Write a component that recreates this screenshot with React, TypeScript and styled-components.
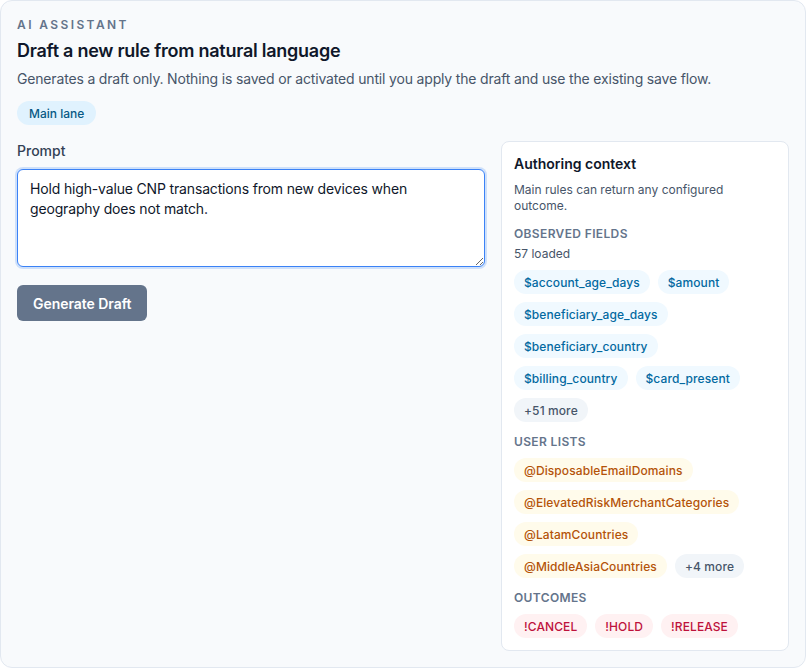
import React from 'react';
import styled, { createGlobalStyle } from 'styled-components';

type Tone = 'sky' | 'amber' | 'rose' | 'slate';

const GlobalStyle = createGlobalStyle`
  html, body {
    margin: 0;
    padding: 0;
    background: #ffffff;
  }
  body {
    font-family: Inter, "Noto Sans", "Liberation Sans", sans-serif;
    -webkit-font-smoothing: antialiased;
  }
  * {
    box-sizing: border-box;
  }
`;

const Card = styled.section`
  border: 1px solid #e2e8f0;
  border-radius: 12px;
  background: #f8fafc;
  padding: 16px;
  display: flex;
  flex-direction: column;
`;

const Eyebrow = styled.div`
  font-size: 12px;
  line-height: 16px;
  font-weight: 600;
  letter-spacing: 0.2em;
  text-transform: uppercase;
  color: #64748b;
`;

const Title = styled.h2`
  margin: 4px 0 0;
  font-size: 18px;
  line-height: 28px;
  font-weight: 600;
  letter-spacing: -0.25px;
  color: #0f172a;
`;

const Description = styled.p`
  margin: 4px 0 0;
  font-size: 14px;
  line-height: 20px;
  letter-spacing: -0.17px;
  color: #475569;
`;

const LaneBadge = styled.span`
  align-self: flex-start;
  margin-top: 12px;
  height: 24px;
  display: inline-flex;
  align-items: center;
  padding: 0 12px;
  border-radius: 999px;
  background: #e0f2fe;
  color: #075985;
  font-size: 12px;
  font-weight: 500;
`;

const Body = styled.div`
  margin-top: 16px;
  display: grid;
  grid-template-columns: 1fr 288px;
  gap: 16px;
  align-items: start;
`;

const PromptColumn = styled.div`
  display: flex;
  flex-direction: column;
`;

const Label = styled.label`
  font-size: 14px;
  line-height: 20px;
  font-weight: 500;
  color: #334155;
`;

const PromptInput = styled.textarea`
  margin-top: 8px;
  height: 98px;
  padding: 9px 12px;
  border: 1px solid #3b82f6;
  border-radius: 6px;
  background: #ffffff;
  box-shadow: 0 0 0 2px rgba(59, 130, 246, 0.22);
  font-family: inherit;
  font-size: 14px;
  line-height: 20px;
  letter-spacing: -0.16px;
  color: #0f172a;
  outline: none;
  resize: vertical;
`;

const GenerateButton = styled.button`
  align-self: flex-start;
  margin-top: 18px;
  height: 36px;
  padding: 0 16px;
  border: none;
  border-radius: 6px;
  background: #64748b;
  color: #ffffff;
  font-family: inherit;
  font-size: 14px;
  font-weight: 600;
  letter-spacing: -0.05px;
`;

const ContextPanel = styled.aside`
  border: 1px solid #e2e8f0;
  border-radius: 8px;
  background: #ffffff;
  padding: 12px;
  display: flex;
  flex-direction: column;
`;

const PanelTitle = styled.h3`
  margin: 0;
  font-size: 14px;
  line-height: 20px;
  font-weight: 600;
  color: #0f172a;
`;

const PanelNote = styled.p`
  margin: 8px 0 0;
  font-size: 12px;
  line-height: 16px;
  color: #475569;
`;

const SectionHeading = styled.div`
  margin-top: 12px;
  font-size: 12px;
  line-height: 16px;
  font-weight: 600;
  letter-spacing: 0.03em;
  text-transform: uppercase;
  color: #64748b;
`;

const Count = styled.div`
  margin-top: 4px;
  font-size: 12px;
  line-height: 16px;
  color: #475569;
`;

const ChipList = styled.div`
  margin-top: 8px;
  display: flex;
  flex-wrap: wrap;
  gap: 8px;
`;

const toneColors: Record<Tone, { bg: string; fg: string }> = {
  sky: { bg: '#f0f9ff', fg: '#0369a1' },
  amber: { bg: '#fffbeb', fg: '#b45309' },
  rose: { bg: '#fff1f2', fg: '#be123c' },
  slate: { bg: '#f1f5f9', fg: '#475569' },
};

const Chip = styled.span<{ $tone: Tone }>`
  height: 24px;
  display: inline-flex;
  align-items: center;
  padding: 0 10px;
  border-radius: 999px;
  font-size: 12px;
  font-weight: 500;
  letter-spacing: 0.1px;
  background: ${(p) => toneColors[p.$tone].bg};
  color: ${(p) => toneColors[p.$tone].fg};
`;

const fields = [
  '$account_age_days',
  '$amount',
  '$beneficiary_age_days',
  '$beneficiary_country',
  '$billing_country',
  '$card_present',
];

const lists = [
  '@DisposableEmailDomains',
  '@ElevatedRiskMerchantCategories',
  '@LatamCountries',
  '@MiddleAsiaCountries',
];

const outcomes = ['!CANCEL', '!HOLD', '!RELEASE'];

const App = () => {
  return (
    <>
      <GlobalStyle />
      <Card>
        <Eyebrow>AI Assistant</Eyebrow>
        <Title>Draft a new rule from natural language</Title>
        <Description>
          Generates a draft only. Nothing is saved or activated until you apply the draft and use the existing save flow.
        </Description>
        <LaneBadge>Main lane</LaneBadge>

        <Body>
          <PromptColumn>
            <Label htmlFor="prompt">Prompt</Label>
            <PromptInput
              id="prompt"
              defaultValue="Hold high-value CNP transactions from new devices when geography does not match."
            />
            <GenerateButton type="button">Generate Draft</GenerateButton>
          </PromptColumn>

          <ContextPanel>
            <PanelTitle>Authoring context</PanelTitle>
            <PanelNote>Main rules can return any configured outcome.</PanelNote>

            <SectionHeading>Observed fields</SectionHeading>
            <Count>57 loaded</Count>
            <ChipList>
              {fields.map((f) => (
                <Chip key={f} $tone="sky">{f}</Chip>
              ))}
              <Chip $tone="slate">+51 more</Chip>
            </ChipList>

            <SectionHeading>User lists</SectionHeading>
            <ChipList>
              {lists.map((l) => (
                <Chip key={l} $tone="amber">{l}</Chip>
              ))}
              <Chip $tone="slate">+4 more</Chip>
            </ChipList>

            <SectionHeading>Outcomes</SectionHeading>
            <ChipList>
              {outcomes.map((o) => (
                <Chip key={o} $tone="rose">{o}</Chip>
              ))}
            </ChipList>
          </ContextPanel>
        </Body>
      </Card>
    </>
  );
};

export default App;
